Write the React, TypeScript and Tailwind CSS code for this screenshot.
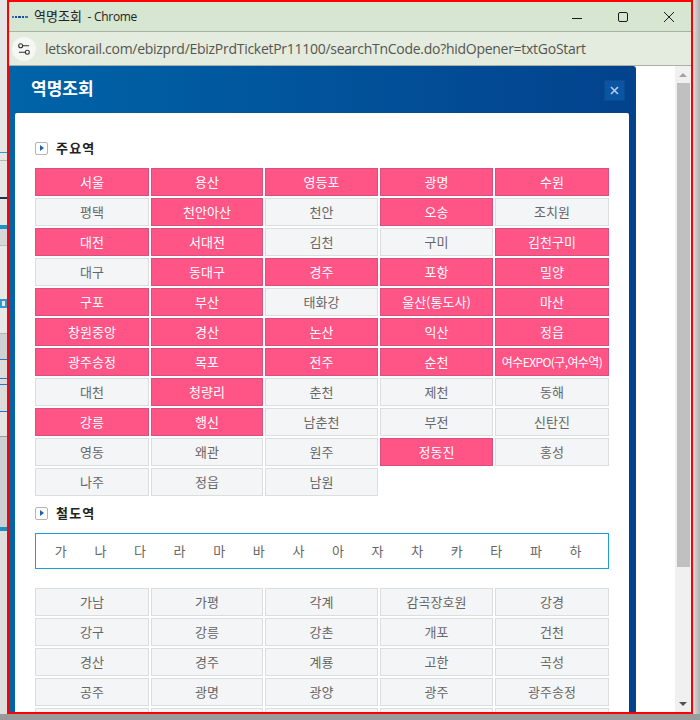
import { Settings2 } from 'lucide-react';
import React from 'react';

const CJK = "font-['Noto_Sans_CJK_KR','Noto_Sans',sans-serif]";

// name, highlighted
const majorStations: [string, boolean][] = [
  ['서울', true], ['용산', true], ['영등포', true], ['광명', true], ['수원', true],
  ['평택', false], ['천안아산', true], ['천안', false], ['오송', true], ['조치원', false],
  ['대전', true], ['서대전', true], ['김천', false], ['구미', false], ['김천구미', true],
  ['대구', false], ['동대구', true], ['경주', true], ['포항', true], ['밀양', true],
  ['구포', true], ['부산', true], ['태화강', false], ['울산(통도사)', true], ['마산', true],
  ['창원중앙', true], ['경산', true], ['논산', true], ['익산', true], ['정읍', true],
  ['광주송정', true], ['목포', true], ['전주', true], ['순천', true], ['여수EXPO(구,여수역)', true],
  ['대천', false], ['청량리', true], ['춘천', false], ['제천', false], ['동해', false],
  ['강릉', true], ['행신', true], ['남춘천', false], ['부전', false], ['신탄진', false],
  ['영동', false], ['왜관', false], ['원주', false], ['정동진', true], ['홍성', false],
  ['나주', false], ['정읍', false], ['남원', false],
];

// last row is cut off by the window, only its top edge shows
const railStations = [
  '가남', '가평', '각계', '감곡장호원', '강경',
  '강구', '강릉', '강촌', '개포', '건천',
  '경산', '경주', '계룡', '고한', '곡성',
  '공주', '광명', '광양', '광주', '광주송정',
  '', '', '', '', '',
];

const letters = ['가', '나', '다', '라', '마', '바', '사', '아', '자', '차', '카', '타', '파', '하'];

function StationButton({ name, active }: { name: string; active?: boolean }) {
  const small = name.length > 10;
  return (
    <div
      className={`h-[28px] flex items-center justify-center border whitespace-nowrap ${
        small ? 'text-[12px] tracking-[-0.6px]' : 'text-[13px]'
      } ${active ? 'bg-[#ff5586] border-[#d94f7d] text-white' : 'bg-[#f4f5f7] border-[#dddddd] text-[#666666]'}`}
    >
      {name}
    </div>
  );
}

function StationGrid({ children }: { children: React.ReactNode }) {
  return (
    <div className="grid grid-cols-[114px_112px_113px_113px_114px] gap-x-[2px] gap-y-[2px]">{children}</div>
  );
}

function SectionTitle({ label }: { label: string }) {
  return (
    <div className="flex items-center gap-[8px] h-[14px]">
      <span className="w-[13px] h-[13px] rounded-[2px] border border-[#b5b5b5] bg-white flex items-center justify-center">
        <span className="w-0 h-0 border-y-[3px] border-y-transparent border-l-[4px] border-l-[#1f5fb4]" />
      </span>
      <span className="text-[13px] font-bold text-[#222222] tracking-[1.2px]">{label}</span>
    </div>
  );
}

function LeftEdge() {
  return (
    <div className="w-[7px] h-full flex flex-col shrink-0 bg-[#e6e6e6]">
      <div className="h-[152px]" />
      <div className="h-[1px] bg-[#2a9ad0]" />
      <div className="h-[7px]" />
      <div className="h-[1px] bg-[#b5b5b5]" />
      <div className="h-[36px]" />
      <div className="h-[2px] bg-[#1c3350]" />
      <div className="h-[26px]" />
      <div className="h-[4px] bg-[#1b95c8]" />
      <div className="h-[16px] bg-[#d5d7d9]" />
      <div className="h-[1px] bg-[#bbbbbb]" />
      <div className="h-[53px] bg-[#e8e8e8]" />
      <div className="h-[9px] bg-[#e8e8e8] border-x-2 border-y-2 border-[#2a9ad0]" />
      <div className="h-[25px] bg-[#e8e8e8]" />
      <div className="h-[1px] bg-[#b5b5b5]" />
      <div className="h-[25px] bg-[#ced1d3]" />
      <div className="h-[1px] bg-[#2b74c4]" />
      <div className="h-[18px] bg-[#dcdcdc]" />
      <div className="h-[1px] bg-[#2b74c4]" />
      <div className="h-[5px] bg-[#dcdcdc]" />
      <div className="h-[1px] bg-[#2b74c4]" />
      <div className="h-[26px] bg-[#dcdcdc]" />
      <div className="h-[1px] bg-[#2b74c4]" />
      <div className="h-[24px] bg-[#e4e4e4]" />
      <div className="h-[1px] bg-[#999999]" />
      <div className="h-[90px] bg-[#ccd0d2]" />
      <div className="h-[4px] bg-[#1b8fc0]" />
      <div className="flex-1 bg-[#dedede]" />
    </div>
  );
}

function App() {
  return (
    <div className={`w-[700px] h-[720px] overflow-hidden flex flex-col bg-[#9a9a9a] ${CJK}`}>
      <div className="h-[714px] flex">
        <LeftEdge />

        <div className="w-[686px] h-full border-2 border-[#ff0000] flex flex-col overflow-hidden bg-white shrink-0">
          {/* Title bar */}
          <div className="h-[30px] shrink-0 bg-[#d7e6d0] flex items-center border-b border-[#a9b0a6]">
            <div className="w-[16px] ml-[3px] flex gap-[1px] items-center">
              <span className="w-[2px] h-[2px] bg-[#2a7fc0]" />
              <span className="w-[3px] h-[2px] bg-[#1b4fa0]" />
              <span className="w-[3px] h-[2px] bg-[#1b4fa0]" />
              <span className="w-[3px] h-[2px] bg-[#1b4fa0]" />
              <span className="w-[3px] h-[2px] bg-[#2a7fc0]" />
            </div>
            <span className="ml-[6px] -mt-[2px] text-[13px] text-[#222222] whitespace-nowrap">
              역명조회 <span className="font-['Open_Sans',sans-serif] text-[12px] tracking-[-0.3px]">&nbsp;- Chrome</span>
            </span>
            <div className="ml-auto flex items-center text-[#1a1a1a]">
              <svg width="46" height="30" viewBox="0 0 46 30" fill="none" stroke="currentColor" strokeWidth="1">
                <path d="M19 16.5h10" />
              </svg>
              <svg width="46" height="30" viewBox="0 0 46 30" fill="none" stroke="currentColor" strokeWidth="1">
                <rect x="19.5" y="10.5" width="9" height="9" rx="1.5" />
              </svg>
              <svg width="46" height="30" viewBox="0 0 46 30" fill="none" stroke="currentColor" strokeWidth="1">
                <path d="M19 10l10 10M29 10l-10 10" />
              </svg>
            </div>
          </div>

          {/* Address bar */}
          <div className="h-[34px] shrink-0 bg-[#e4ebdf] flex items-center border-b border-[#a9b0a6]">
            <div className="ml-[3px] w-[24px] h-[24px] rounded-full bg-[#f5f7f2] flex items-center justify-center text-[#333333]">
              <Settings2 size={16} strokeWidth={1.6} />
            </div>
            <span className="ml-[9px] -mt-[1px] font-['Open_Sans',sans-serif] text-[14px] tracking-[-0.275px] text-[#55564f] whitespace-nowrap">
              letskorail.com/ebizprd/EbizPrdTicketPr11100/searchTnCode.do?hidOpener=txtGoStart
            </span>
          </div>

          {/* Page */}
          <div className="flex-1 flex min-h-0 overflow-hidden">
            <div className="w-[627px] shrink-0 rounded-tr-[3px] bg-linear-to-r from-[#0064a8] to-[#03428d] pl-[6px] pr-[7px] flex flex-col">
              <div className="h-[47px] shrink-0 flex items-center justify-between pl-[16px] pr-[4px]">
                <span className="text-[17px] font-bold text-white -mt-[3px]">역명조회</span>
                <span className="w-[21px] h-[21px] mt-[1px] bg-[#0a54a4] border border-[#0d4a8e] flex items-center justify-center">
                  <svg width="9" height="9" viewBox="0 0 9 9" fill="none" stroke="#b9cce6" strokeWidth="1.6">
                    <path d="M1 1l7 7M8 1l-7 7" />
                  </svg>
                </span>
              </div>

              <div className="flex-1 bg-white rounded-t-[2px] px-[20px] pt-[28px] overflow-hidden">
                <SectionTitle label="주요역" />
                <div className="mt-[13px]">
                  <StationGrid>
                    {majorStations.map(([name, active], i) => (
                      <StationButton key={i} name={name} active={active} />
                    ))}
                  </StationGrid>
                </div>

                <div className="mt-[10px]">
                  <SectionTitle label="철도역" />
                </div>

                <div className="mt-[13px] h-[36px] border border-[#1a9fd8] flex items-center pl-[5px]">
                  {letters.map((l) => (
                    <span key={l} className="w-[39.6px] text-center text-[13px] text-[#666666]">
                      {l}
                    </span>
                  ))}
                </div>

                <div className="mt-[19px]">
                  <StationGrid>
                    {railStations.map((name, i) => (
                      <StationButton key={i} name={name} />
                    ))}
                  </StationGrid>
                </div>
              </div>
            </div>

            <div className="flex-1" />

            {/* Scrollbar */}
            <div className="w-[16px] shrink-0 bg-[#f0f0f0] flex flex-col items-center">
              <div className="h-[17px] flex items-center justify-center shrink-0">
                <span className="w-0 h-0 border-x-[4px] border-x-transparent border-b-[4px] border-b-[#a3a3a3]" />
              </div>
              <div className="w-[13px] h-[484px] bg-[#c0c0c0] ml-[1px]" />
              <div className="flex-1" />
              <div className="h-[17px] flex items-center justify-center shrink-0">
                <span className="w-0 h-0 border-x-[4px] border-x-transparent border-t-[4px] border-t-[#505050]" />
              </div>
            </div>
          </div>
        </div>

        <div className="flex-1 bg-linear-to-r from-[#dcdcdc] to-[#b0b0b0]" />
      </div>
      <div className="flex-1 bg-[#9a9a9a]" />
    </div>
  );
}

export default App;
